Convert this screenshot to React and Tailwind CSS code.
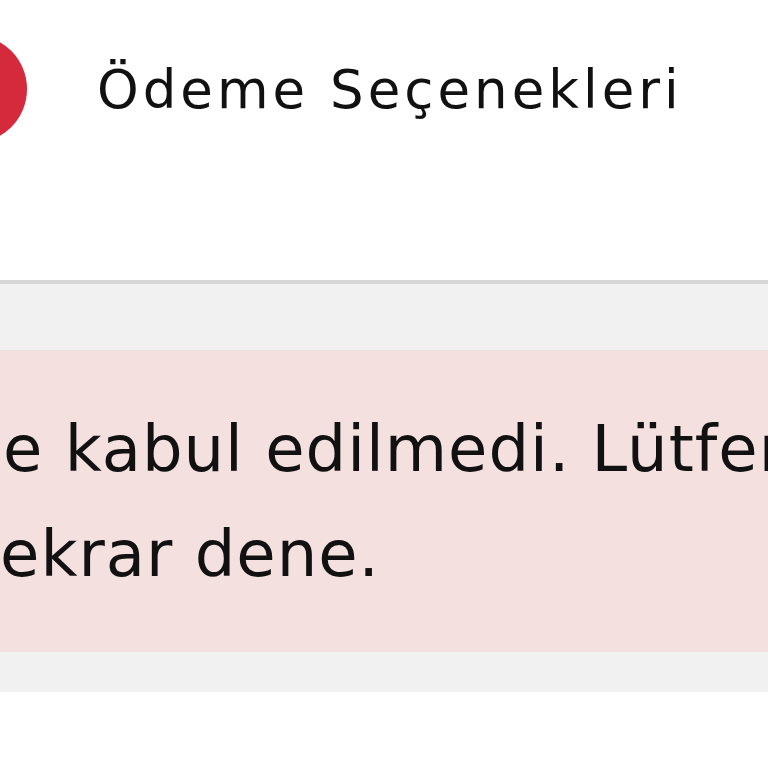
export default function App() {
  return (
    <div className="w-[768px] h-[768px] overflow-hidden bg-white" style={{ fontFamily: '"DejaVu Sans", sans-serif' }}>
      <div className="h-[280px] relative">
        <div className="absolute left-[-81px] top-[35px] w-[108px] h-[108px] rounded-full bg-[#d42a3c]" />
        <div className="pl-[97px] pt-[50px] text-[53px] leading-[80px] tracking-[4px] text-[#111] whitespace-nowrap">Ödeme Seçenekleri</div>
      </div>
      <div className="h-[4px] bg-[#d6d6d6]" />
      <div className="bg-[#f1f1f1] pt-[66px] pb-[40px]">
        <div className="bg-[#f5e0e0] h-[302px] pt-[47px] text-[64px] leading-[105px] tracking-[1px] text-[#111] whitespace-nowrap overflow-hidden">
          <div className="pl-[3px]">e kabul edilmedi. Lütfen</div>
          <div>ekrar dene.</div>
        </div>
      </div>
    </div>
  );
}
